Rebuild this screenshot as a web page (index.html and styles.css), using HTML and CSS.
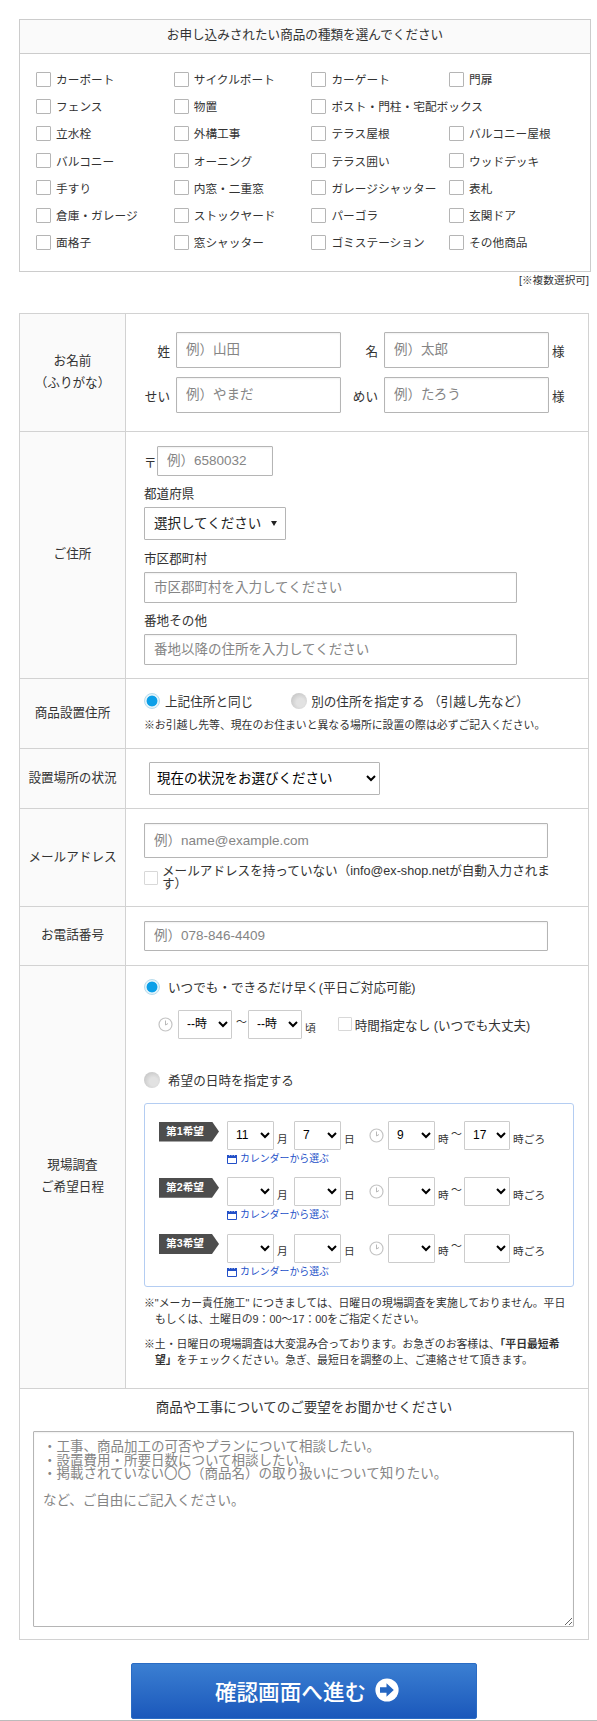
FILE: index.html
```html
<!DOCTYPE html>
<html lang="ja">

<head>
  <meta charset="UTF-8">
  <meta name="viewport" content="width=device-width, initial-scale=1.0">
  <title>お申し込みフォーム</title>
  <link rel="stylesheet" href="styles.css">
</head>

<body>
  <svg class="defs" width="0" height="0">
    <symbol id="clock" viewBox="0 0 15 15">
      <circle cx="7.5" cy="7.5" r="6.5" fill="#fff" stroke="#c4c4c4" stroke-width="1.2" />
      <path d="M7.5 3.5V8L10 6.5" fill="none" stroke="#b8b8b8" stroke-width="1" />
    </symbol>
    <symbol id="calendar" viewBox="0 0 10 10">
      <path d="M.5 1.5h9v8h-9z" fill="#fff" stroke="#2350c8" />
      <path d="M0 1h10v3H0z" fill="#2350c8" />
      <path d="M2.5 0v2M5 0v2M7.5 0v2" stroke="#fff" stroke-width=".6" />
    </symbol>
  </svg>
  <form>
    <section class="products">
      <h2 class="products-title">お申し込みされたい商品の種類を選んでください</h2>
      <div class="products-list">
        <label><input type="checkbox">カーポート</label>
        <label><input type="checkbox">サイクルポート</label>
        <label><input type="checkbox">カーゲート</label>
        <label><input type="checkbox">門扉</label>
        <label><input type="checkbox">フェンス</label>
        <label><input type="checkbox">物置</label>
        <label class="wide"><input type="checkbox">ポスト・門柱・宅配ボックス</label>
        <label><input type="checkbox">立水栓</label>
        <label><input type="checkbox">外構工事</label>
        <label><input type="checkbox">テラス屋根</label>
        <label><input type="checkbox">バルコニー屋根</label>
        <label><input type="checkbox">バルコニー</label>
        <label><input type="checkbox">オーニング</label>
        <label><input type="checkbox">テラス囲い</label>
        <label><input type="checkbox">ウッドデッキ</label>
        <label><input type="checkbox">手すり</label>
        <label><input type="checkbox">内窓・二重窓</label>
        <label><input type="checkbox">ガレージシャッター</label>
        <label><input type="checkbox">表札</label>
        <label><input type="checkbox">倉庫・ガレージ</label>
        <label><input type="checkbox">ストックヤード</label>
        <label><input type="checkbox">パーゴラ</label>
        <label><input type="checkbox">玄関ドア</label>
        <label><input type="checkbox">面格子</label>
        <label><input type="checkbox">窓シャッター</label>
        <label><input type="checkbox">ゴミステーション</label>
        <label><input type="checkbox">その他商品</label>
      </div>
    </section>
    <p class="multi">[※複数選択可]</p>

    <table class="entry">
      <tr class="row-name">
        <th>お名前<br>（ふりがな）</th>
        <td>
          <div class="name-line">
            <span class="name-label">姓</span><input type="text" placeholder="例）山田">
            <span class="name-label second">名</span><input type="text" placeholder="例）太郎">
            <span class="sama">様</span>
          </div>
          <div class="name-line">
            <span class="name-label">せい</span><input type="text" placeholder="例）やまだ">
            <span class="name-label second">めい</span><input type="text" placeholder="例）たろう">
            <span class="sama">様</span>
          </div>
        </td>
      </tr>
      <tr class="row-address">
        <th>ご住所</th>
        <td>
          <div class="zip"><span>〒</span><input type="text" placeholder="例）6580032"></div>
          <p class="sub">都道府県</p>
          <button type="button" class="pref">選択してください<i></i></button>
          <p class="sub city">市区郡町村</p>
          <input class="addr" type="text" placeholder="市区郡町村を入力してください">
          <p class="sub street">番地その他</p>
          <input class="addr" type="text" placeholder="番地以降の住所を入力してください">
        </td>
      </tr>
      <tr class="row-place">
        <th>商品設置住所</th>
        <td>
          <div class="radios">
            <label><input type="radio" name="place" checked>上記住所と同じ</label>
            <label class="other"><input type="radio" name="place">別の住所を指定する （引越し先など）</label>
          </div>
          <p class="note">※お引越し先等、現在のお住まいと異なる場所に設置の際は必ずご記入ください。</p>
        </td>
      </tr>
      <tr class="row-status">
        <th>設置場所の状況</th>
        <td><select class="status"><option>現在の状況をお選びください</option></select></td>
      </tr>
      <tr class="row-mail">
        <th>メールアドレス</th>
        <td>
          <input class="mail" type="text" placeholder="例）name@example.com">
          <label class="no-mail"><input class="pale" type="checkbox"><span>メールアドレスを持っていない（info@ex-shop.netが自動入力されます）</span></label>
        </td>
      </tr>
      <tr class="row-tel">
        <th>お電話番号</th>
        <td><input class="tel" type="text" placeholder="例）078-846-4409"></td>
      </tr>
      <tr class="row-date">
        <th>現場調査<br>ご希望日程</th>
        <td>
          <label class="when"><input type="radio" name="when" checked>いつでも・できるだけ早く(平日ご対応可能)</label>
          <div class="anytime">
            <svg class="clock"><use href="#clock" /></svg>
            <select><option>--時</option></select>
            <span class="tilde">～</span>
            <select><option>--時</option></select>
            <span class="unit">頃</span>
            <label><input class="pale" type="checkbox">時間指定なし (いつでも大丈夫)</label>
          </div>
          <label class="when"><input type="radio" name="when">希望の日時を指定する</label>
          <div class="wishes">
            <div class="wish">
              <b class="tag">第1希望</b>
              <select class="month"><option>11</option></select><span class="unit">月</span>
              <select class="day"><option>7</option></select><span class="unit">日</span>
              <svg class="clock"><use href="#clock" /></svg>
              <select class="from"><option>9</option></select><span class="unit">時</span><span class="tilde">～</span>
              <select class="to"><option>17</option></select><span class="unit">時ごろ</span>
              <a class="cal"><svg><use href="#calendar" /></svg>カレンダーから選ぶ</a>
            </div>
            <div class="wish">
              <b class="tag">第2希望</b>
              <select class="month"><option></option></select><span class="unit">月</span>
              <select class="day"><option></option></select><span class="unit">日</span>
              <svg class="clock"><use href="#clock" /></svg>
              <select class="from"><option></option></select><span class="unit">時</span><span class="tilde">～</span>
              <select class="to"><option></option></select><span class="unit">時ごろ</span>
              <a class="cal"><svg><use href="#calendar" /></svg>カレンダーから選ぶ</a>
            </div>
            <div class="wish">
              <b class="tag">第3希望</b>
              <select class="month"><option></option></select><span class="unit">月</span>
              <select class="day"><option></option></select><span class="unit">日</span>
              <svg class="clock"><use href="#clock" /></svg>
              <select class="from"><option></option></select><span class="unit">時</span><span class="tilde">～</span>
              <select class="to"><option></option></select><span class="unit">時ごろ</span>
              <a class="cal"><svg><use href="#calendar" /></svg>カレンダーから選ぶ</a>
            </div>
          </div>
          <p class="note hang">※"メーカー責任施工" につきましては、日曜日の現場調査を実施しておりません。平日<br>もしくは、土曜日の9：00～17：00をご指定ください。</p>
          <p class="note hang">※土・日曜日の現場調査は大変混み合っております。お急ぎのお客様は、<b>「平日最短希<br>望」</b>をチェックください。急ぎ、最短日を調整の上、ご連絡させて頂きます。</p>
        </td>
      </tr>
      <tr class="row-request">
        <td colspan="2">
          <p class="request-title">商品や工事についてのご要望をお聞かせください</p>
          <textarea placeholder="・工事、商品加工の可否やプランについて相談したい。
・設置費用・所要日数について相談したい。
・掲載されていない〇〇（商品名）の取り扱いについて知りたい。

など、ご自由にご記入ください。"></textarea>
        </td>
      </tr>
    </table>

    <div class="submit-area">
      <button type="button" class="submit">確認画面へ進む
        <svg width="24" height="24" viewBox="0 0 24 24">
          <circle cx="12" cy="12" r="11.6" fill="#fff" />
          <path d="M5 9.3h6.5V5.2L18.8 12l-7.3 6.8v-4.1H5z" fill="#2566c2" />
        </svg>
      </button>
    </div>
  </form>
</body>

</html>
```

FILE: styles.css
```css
* {
  box-sizing: border-box;
}

body {
  margin: 0;
  height: 1721px;
  overflow: hidden;
  background: #fff;
  border-bottom: 1px solid #bbb;
  color: #333;
  font-family: "Liberation Sans", "Noto Sans CJK JP", sans-serif;
  font-size: 12.6px;
}

p,
h2 {
  margin: 0;
  font-weight: normal;
}

.defs {
  position: absolute;
}

input,
select,
textarea,
button {
  margin: 0;
  font-family: inherit;
  font-size: 13.5px;
}

input[type="text"],
textarea {
  padding: 0 9px 1px;
  border: 1px solid #b5b5b5;
  border-radius: 1px;
  outline: none;
  background: #fff;
  box-shadow: inset 0 1px 2px rgba(0, 0, 0, .06);
}

::placeholder {
  color: #858585;
}

select {
  padding: 0 0 1px;
  border: 1px solid #ccc;
  border-radius: 1px;
  background: #fff;
  color: #000;
}

input[type="checkbox"] {
  appearance: none;
  flex: none;
  width: 15px;
  height: 15px;
  border: 1px solid #b5b5b5;
  border-radius: 1px;
  background: #fff;
}

input.pale {
  width: 14px;
  height: 14px;
  border-color: #d8d8d8;
}

input[type="radio"] {
  appearance: none;
  flex: none;
  width: 16px;
  height: 16px;
  border-radius: 50%;
  background: radial-gradient(circle at 60% 60%, #e2e2e2 30%, #c9c9c9 75%);
}

input[type="radio"]:checked {
  border: 1px solid #b9dcec;
  background: radial-gradient(circle, #0b9fe8 5px, #e4f4fb 5.8px);
}

label {
  display: flex;
  align-items: center;
  white-space: nowrap;
}

/* 商品の種類 */
.products {
  width: 572px;
  height: 253px;
  margin: 19px 0 0 19px;
  border: 1px solid #ccc;
}

.products-title {
  height: 34px;
  border-bottom: 1px solid #ccc;
  background: #fafafa;
  font-size: 12.6px;
  line-height: 31px;
  text-align: center;
}

.products-list {
  display: grid;
  grid-template-columns: repeat(4, 137.7px);
  grid-auto-rows: 27.2px;
  padding: 11px 0 0 16px;
  font-size: 11.7px;
}

.products-list input {
  margin: 1px 5px 0 0;
}

.products-list .wide {
  grid-column: span 2;
}

.multi {
  width: 570px;
  margin-left: 19px;
  height: 41px;
  font-size: 10.7px;
  line-height: 17px;
  text-align: right;
}

/* 入力欄 */
.entry {
  width: 570px;
  margin-left: 19px;
  border-collapse: collapse;
  table-layout: fixed;
}

.entry th,
.entry td {
  padding: 0;
  border: 1px solid #d2d2d2;
}

.entry th {
  width: 106px;
  background: #fafafa;
  font-weight: normal;
  line-height: 21.6px;
  white-space: nowrap;
}

.entry td {
  padding-left: 18px;
  vertical-align: top;
}

.row-name { height: 118px; }
.row-address { height: 247px; }
.row-place { height: 70px; }
.row-status { height: 60px; }
.row-mail { height: 98px; }
.row-tel { height: 59px; }
.row-date { height: 423px; }
.row-request { height: 251px; }

.name-line {
  display: flex;
  align-items: center;
  margin-bottom: 9px;
}

.row-name td {
  padding-top: 18px;
}

.name-line input {
  width: 165px;
  height: 36px;
}

.name-label {
  flex: none;
  width: 26px;
  margin-right: 6px;
  text-align: right;
  white-space: nowrap;
}

.name-label.second {
  width: 37px;
}

.sama {
  margin-left: 3px;
}

.row-address td {
  padding-top: 14px;
}

.zip {
  display: flex;
  align-items: center;
}

.zip span {
  width: 13px;
}

.zip input {
  width: 116px;
  height: 30px;
}

.sub {
  height: 19px;
  margin-top: 12px;
  line-height: 13px;
}

.sub.city {
  height: 19px;
  margin-top: 13px;
}

.sub.street {
  height: 19px;
}

.pref {
  display: flex;
  align-items: center;
  width: 142px;
  height: 33px;
  padding: 0 8px 3px 9px;
  border: 1px solid #b5b5b5;
  border-radius: 1px;
  background: #fff;
  color: #222;
}

.pref i {
  margin: 2px 0 0 auto;
  border: 3px solid transparent;
  border-top: 5px solid #222;
  border-bottom: 0;
}

.addr {
  display: block;
  width: 373px;
  height: 31px;
}

.row-place td {
  padding-top: 12px;
}

.radios {
  display: flex;
}

.radios input {
  margin-right: 5px;
}

.radios .other {
  margin-left: 38px;
}

.radios .other input {
  margin-right: 4px;
}

.note {
  font-size: 10.85px;
  line-height: 15px;
  white-space: nowrap;
}

.row-place .note {
  margin-top: 8px;
}

.row-status td {
  padding: 13px 0 0 23px;
}

.status {
  width: 231px;
  height: 33px;
  padding-left: 3px;
  border-color: #b5b5b5;
}

.row-mail td {
  padding-top: 14px;
}

.mail {
  display: block;
  width: 404px;
  height: 35px;
}

.no-mail {
  width: 420px;
  margin-top: 7px;
  line-height: 12.5px;
  white-space: normal;
}

.no-mail span {
  width: 393px;
  margin-left: 4px;
}

.row-tel td {
  padding-top: 14px;
}

.tel {
  display: block;
  width: 404px;
  height: 30px;
}

.row-date td {
  padding-top: 11px;
}

.when {
  height: 19px;
}

.when input {
  margin-right: 8px;
}

.anytime {
  display: flex;
  align-items: center;
  height: 30px;
  margin: 13px 0 31px 14px;
}

.clock {
  flex: none;
  width: 15px;
  height: 15px;
}

.anytime select {
  width: 54px;
  height: 29px;
  padding-left: 4px;
  font-size: 12px;
}

.anytime .clock {
  margin-right: 5px;
}

.tilde {
  width: 10px;
  margin: -6px 2px 0 4px;
  font-size: 11px;
}

.unit {
  font-size: 10.7px;
}

.anytime .unit {
  margin: 6px 22px 0 3px;
}

.anytime .pale {
  margin-right: 3px;
}

.wishes {
  width: 430px;
  height: 184px;
  margin: 14px 0 9px;
  padding: 17px 0 0 14px;
  border: 1px solid #b4cdf2;
  border-radius: 3px;
}

.wish {
  display: flex;
  flex-wrap: wrap;
  align-items: center;
  height: 56.3px;
  align-content: flex-start;
}

.wish select {
  width: 47px;
  height: 29px;
  padding-left: 4px;
  font-size: 12px;
}

.wish .to {
  width: 46px;
}

.wish .unit {
  width: 17px;
  margin: 5px 0 0 3px;
}

.wish .unit:last-of-type {
  width: 34px;
}

.wish .day + .unit {
  width: 25px;
}

.wish .from + .unit {
  width: 10px;
}

.wish .clock {
  margin-right: 4px;
}

.wish .tilde {
  margin: -6px 3px 0 3px;
}

.tag {
  width: 60px;
  height: 20px;
  margin: -8px 8px 0 0;
  padding-left: 7px;
  background: #4d4d4d;
  clip-path: polygon(0 0, 53px 0, 100% 50%, 53px 100%, 0 100%);
  color: #fff;
  font-size: 10.7px;
  line-height: 18px;
}

.cal {
  display: flex;
  align-items: center;
  width: 300px;
  margin-left: 68px;
  color: #2350c8;
  font-size: 9.9px;
  line-height: 18px;
}

.cal svg {
  width: 10px;
  height: 10px;
  margin-right: 3px;
}

.hang {
  margin-bottom: 10px;
  padding-left: 11px;
  text-indent: -11px;
  line-height: 15.5px;
}

.entry .row-request td {
  padding: 9px 0 0 13px;
}

.request-title {
  width: 542px;
  height: 33px;
  font-size: 13.5px;
  line-height: 19px;
  text-align: center;
}

textarea {
  display: block;
  width: 541px;
  height: 196px;
}

.entry textarea {
  padding: 8px 9px;
  line-height: 13.5px;
}

.submit-area {
  width: 346px;
  margin: 23px 0 0 131px;
}

.submit {
  display: flex;
  align-items: center;
  justify-content: center;
  gap: 9px;
  width: 346px;
  height: 56px;
  padding: 0 0 2px 6px;
  border: 1px solid #2b6cc4;
  border-radius: 2px;
  background: linear-gradient(#3b7fd2, #1b58bb);
  color: #fff;
  font-size: 21.6px;
  font-weight: 500;
}
```
